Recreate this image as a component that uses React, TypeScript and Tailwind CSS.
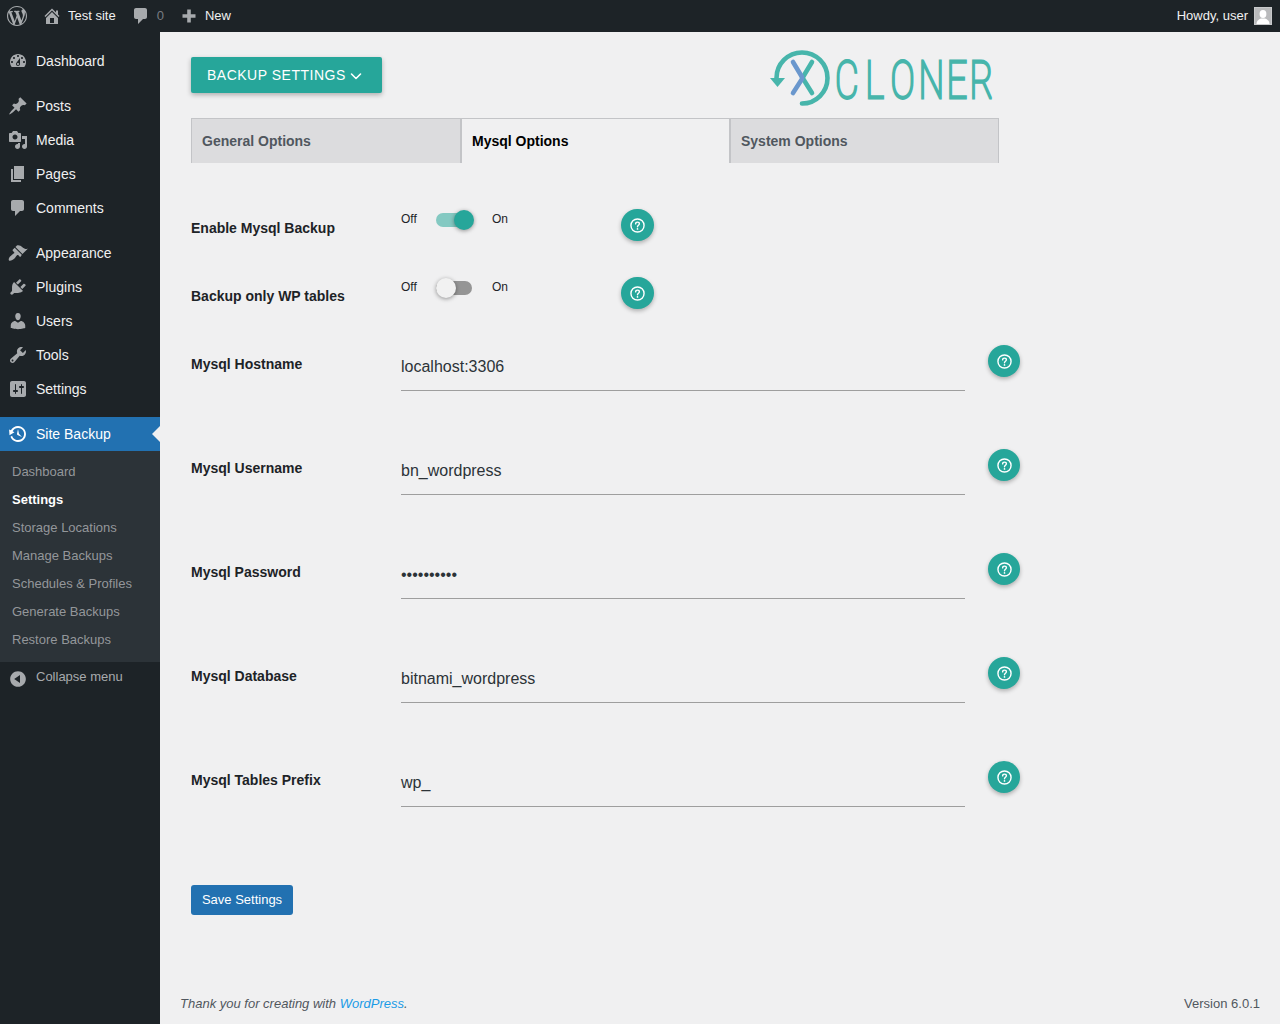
import React from "react";

const FONT = "[font-family:'Liberation_Sans',Arial,sans-serif]";

const P: Record<string, string> = {
  wp: "M20 10c0-5.51-4.49-10-10-10C4.48 0 0 4.49 0 10c0 5.52 4.48 10 10 10 5.51 0 10-4.48 10-10zM7.78 15.37L4.37 6.22c.55-.02 1.17-.08 1.17-.08.5-.06.44-1.13-.06-1.11 0 0-1.45.11-2.37.11-.18 0-.37 0-.58-.01C4.12 2.69 6.87 1.11 10 1.11c2.33 0 4.45.87 6.05 2.34-.68-.11-1.65.39-1.65 1.58 0 .74.45 1.36.9 2.1.35.61.55 1.36.55 2.46 0 1.49-1.4 5-1.4 5l-3.03-8.37c.54-.02.82-.17.82-.17.5-.05.44-1.25-.06-1.22 0 0-1.44.12-2.38.12-.87 0-2.33-.12-2.33-.12-.5-.03-.56 1.2-.06 1.22l.92.08 1.26 3.41zM17.41 10c.24-.64.74-1.87.43-4.25.7 1.29 1.05 2.71 1.05 4.25 0 3.29-1.73 6.24-4.4 7.78.97-2.59 1.94-5.2 2.92-7.78zM6.1 18.09C3.12 16.65 1.11 13.53 1.11 10c0-1.3.23-2.48.72-3.59C3.25 10.3 4.67 14.2 6.1 18.09zm4.03-6.63l2.58 6.98c-.86.29-1.76.45-2.71.45-.79 0-1.57-.11-2.29-.33.81-2.38 1.62-4.74 2.42-7.1z",
  home: "M16 8.5l1.53 1.53-1.06 1.06L10 4.62l-6.47 6.47-1.06-1.06L10 2.5l4 4v-2h2v4zm-6-2.46l6 5.99V18H4v-5.97zM12 17v-5H8v5h4z",
  comment: "M5 2h9c1.1 0 2 .9 2 2v7c0 1.1-.9 2-2 2h-2l-5 5v-5H5c-1.1 0-2-.9-2-2V4c0-1.1.9-2 2-2z",
  plus: "M16.5 8.2v3.6h-4.7v4.7H8.2v-4.7H3.5V8.2h4.7V3.5h3.6v4.7z",
  dashboard: "M3.76 16h12.48c1.1-1.37 1.76-3.11 1.76-5 0-4.42-3.58-8-8-8s-8 3.58-8 8c0 1.89.66 3.63 1.76 5zM10 4c.55 0 1 .45 1 1s-.45 1-1 1-1-.45-1-1 .45-1 1-1zM6 6c.55 0 1 .45 1 1s-.45 1-1 1-1-.45-1-1 .45-1 1-1zm8 0c.55 0 1 .45 1 1s-.45 1-1 1-1-.45-1-1 .45-1 1-1zm-5.37 5.55L12 7v6c0 1.1-.9 2-2 2s-2-.9-2-2c0-.57.24-1.08.63-1.45zM4 10c.55 0 1 .45 1 1s-.45 1-1 1-1-.45-1-1 .45-1 1-1zm12 0c.55 0 1 .45 1 1s-.45 1-1 1-1-.45-1-1 .45-1 1-1zm-5 3c0-.55-.45-1-1-1s-1 .45-1 1 .45 1 1 1 1-.45 1-1z",
  pin: "M10.44 3.02l1.82-1.82 6.36 6.35-1.83 1.82c-1.05-.68-2.48-.57-3.41.36l-.75.75c-.92.93-1.04 2.35-.35 3.41l-1.83 1.82-2.41-2.41-2.8 2.79c-.42.42-3.38 2.71-3.8 2.29s1.86-3.39 2.28-3.81l2.79-2.79L4.1 9.36l1.83-1.82c1.05.69 2.48.57 3.4-.36l.75-.75c.93-.92 1.05-2.35.36-3.41z",
  media: "M13 11V4c0-.55-.45-1-1-1h-1.67L9 1H5L3.67 3H2c-.55 0-1 .45-1 1v7c0 .55.45 1 1 1h10c.55 0 1-.45 1-1zM7 4.5c1.38 0 2.5 1.12 2.5 2.5S8.38 9.5 7 9.5 4.5 8.38 4.5 7 5.62 4.5 7 4.5zM14 6h5v10.5c0 1.38-1.12 2.5-2.5 2.5S14 17.88 14 16.5s1.12-2.5 2.5-2.5c.17 0 .34.02.5.05V9h-3V6zm-4 8.05V13h2v3.5c0 1.38-1.12 2.5-2.5 2.5S7 17.88 7 16.5 8.12 14 9.5 14c.17 0 .34.02.5.05z",
  page: "M6 15V2h10v13H6zm-1 1h8v2H3V5h2v11z",
  appearance: "M14.48 11.06L7.41 3.99l1.5-1.5c.5-.56 2.3-.47 3.51.32 1.21.8 1.43 1.28 2.91 2.1 1.18.64 2.45 1.26 4.45.85zm-.71.71L6.7 4.7 4.93 6.47c-.39.39-.39 1.02 0 1.41l1.06 1.06c.39.39.39 1.03 0 1.42-.6.6-1.43 1.11-2.21 1.69-.35.26-.7.53-1.01.84C1.43 13.23.1 16.5 1 17.4c.9.9 4.13-.47 5.47-1.81.31-.31.58-.66.85-1.02.57-.78 1.08-1.6 1.69-2.21.39-.39 1.02-.39 1.41 0l1.06 1.06c.39.39 1.02.39 1.41 0z",
  plugins: "M13.11 4.36L9.87 7.6 8 5.73l3.24-3.24c.35-.34 1.05-.2 1.56.32.52.51.66 1.21.31 1.55zm-8 1.77l.91-1.12 9.01 9.01-1.19.84c-.71.71-2.63 1.16-3.82 1.16H6.14L4.9 17.26c-.59.59-1.54.59-2.12 0-.59-.58-.59-1.53 0-2.12l1.24-1.24v-3.88c0-1.13.4-3.19 1.09-3.89zm7.26 3.97l3.24-3.24c.34-.35 1.04-.21 1.55.31.52.51.66 1.21.31 1.55l-3.24 3.25z",
  users: "M10 9.25c-2.27 0-2.73-3.44-2.73-3.44C7 4.02 7.82 2 9.97 2c2.16 0 2.98 2.02 2.71 3.81 0 0-.41 3.44-2.68 3.44zm0 2.57L12.72 10c2.39 0 4.52 2.33 4.52 4.53v2.49s-3.65 1.13-7.24 1.13c-3.65 0-7.24-1.13-7.24-1.13v-2.49c0-2.25 1.94-4.48 4.47-4.48z",
  tools: "M16.68 9.77c-1.34 1.34-3.3 1.67-4.95.99l-5.41 6.52c-.99.99-2.59.99-3.58 0s-.99-2.59 0-3.57l6.52-5.42c-.68-1.65-.35-3.61.99-4.95 1.28-1.28 3.12-1.62 4.72-1.06l-2.89 2.89 2.82 2.82 2.86-2.87c.53 1.58.18 3.39-1.08 4.65zM3.81 16.21c.4.39 1.04.39 1.43 0 .4-.4.4-1.04 0-1.43-.39-.4-1.03-.4-1.43 0-.39.39-.39 1.03 0 1.43z",
  settings: "M18 16V4c0-1.1-.9-2-2-2H4c-1.1 0-2 .9-2 2v12c0 1.1.9 2 2 2h12c1.1 0 2-.9 2-2zM8 11h1c.55 0 1 .45 1 1s-.45 1-1 1H8v1.5c0 .28-.22.5-.5.5s-.5-.22-.5-.5V13H6c-.55 0-1-.45-1-1s.45-1 1-1h1V5.5c0-.28.22-.5.5-.5s.5.22.5.5V11zm5-2h-1c-.55 0-1-.45-1-1s.45-1 1-1h1V5.5c0-.28.22-.5.5-.5s.5.22.5.5V7h1c.55 0 1 .45 1 1s-.45 1-1 1h-1v5.5c0 .28-.22.5-.5.5s-.5-.22-.5-.5V9z",
  backup: "M13.65 2.88c3.93 2.01 5.48 6.84 3.47 10.77s-6.83 5.48-10.77 3.47c-1.87-.96-3.2-2.56-3.86-4.4l1.64-1.03c.45 1.57 1.52 2.95 3.08 3.76 3.01 1.54 6.69.35 8.23-2.66 1.55-3.01.36-6.69-2.65-8.24C9.78 3.01 6.1 4.2 4.56 7.21l1.88.97-4.95 3.08-.39-5.82 1.78.91C4.89 2.4 9.72.86 13.65 2.88zm-4.36 7.83C9.11 10.53 9 10.28 9 10c0-.07.03-.12.04-.19h-.01L10 5l.97 4.81L14 13l-4.5-2.12.02-.02c-.08-.04-.16-.09-.23-.15z",
  collapse: "M10 2.16c4.33 0 7.84 3.51 7.84 7.84s-3.51 7.84-7.84 7.84S2.16 14.33 2.16 10 5.71 2.16 10 2.16zm2 11.72V6.12L6.18 9.97z",
};

function Dash({ name, className }: { name: string; className: string }) {
  return (
    <svg viewBox="0 0 20 20" className={className} fill="currentColor" fillRule="evenodd">
      <path d={P[name]} />
    </svg>
  );
}

function MenuItem({ icon, label }: { icon: string; label: string }) {
  return (
    <div className="flex h-[34px] items-center text-[14px] text-[#f0f0f1]">
      <Dash name={icon} className="ml-2 mr-2 h-5 w-5 shrink-0 text-[#a7aaad]" />
      <span>{label}</span>
    </div>
  );
}

function Sidebar() {
  const subs = ["Dashboard", "Settings", "Storage Locations", "Manage Backups", "Schedules & Profiles", "Generate Backups", "Restore Backups"];
  return (
    <aside className="flex w-40 shrink-0 flex-col bg-[#1d2327] pt-3">
      <MenuItem icon="dashboard" label="Dashboard" />
      <div className="h-[11px]" />
      <MenuItem icon="pin" label="Posts" />
      <MenuItem icon="media" label="Media" />
      <MenuItem icon="page" label="Pages" />
      <MenuItem icon="comment" label="Comments" />
      <div className="h-[11px]" />
      <MenuItem icon="appearance" label="Appearance" />
      <MenuItem icon="plugins" label="Plugins" />
      <MenuItem icon="users" label="Users" />
      <MenuItem icon="tools" label="Tools" />
      <MenuItem icon="settings" label="Settings" />
      <div className="h-[11px]" />
      <div className="relative flex h-[34px] items-center bg-[#2271b1] text-[14px] text-white">
        <Dash name="backup" className="ml-2 mr-2 h-5 w-5 shrink-0 text-white" />
        <span>Site Backup</span>
        <div className="absolute right-0 top-[9px] h-0 w-0 border-y-[8px] border-r-[8px] border-y-transparent border-r-[#f0f0f1]" />
      </div>
      <div className="bg-[#2c3338] pb-[8px] pt-[7px] text-[13px] text-[#c3c4c7]/70">
        {subs.map((s) => (
          <div key={s} className={`flex h-[28px] items-center pl-3 ${s === "Settings" ? "font-semibold text-white" : ""}`}>
            {s}
          </div>
        ))}
      </div>
      <div className="flex h-[32px] items-start text-[13px] text-[#a7aaad]">
        <Dash name="collapse" className="ml-2 mt-[7px] h-5 w-5 shrink-0 text-[#a7aaad]" />
        <span className="pl-2 pt-[5px]">Collapse menu</span>
      </div>
    </aside>
  );
}

function AdminBar() {
  return (
    <header className="flex h-8 shrink-0 items-center bg-[#1d2327] text-[13px] text-[#f0f0f1]">
      <Dash name="wp" className="ml-[7px] h-5 w-5 text-[#a7aaad]" />
      <Dash name="home" className="ml-[15px] h-5 w-5 text-[#a7aaad]" />
      <span className="ml-[6px]">Test site</span>
      <Dash name="comment" className="ml-[15px] h-5 w-5 text-[#a7aaad]" />
      <span className="ml-[6px] text-[#787c82]">0</span>
      <Dash name="plus" className="ml-[15px] h-5 w-5 text-[#a7aaad]" />
      <span className="ml-[6px]">New</span>
      <span className="ml-auto">Howdy, user</span>
      <svg viewBox="0 0 18 18" className="ml-[6px] mr-2 h-[18px] w-[18px]">
        <rect width="18" height="18" fill="#c8c9cb" />
        <rect x="1" y="1" width="16" height="16" fill="#b9babc" />
        <ellipse cx="9" cy="7" rx="3.4" ry="4" fill="#fff" />
        <path d="M2.5 17c0-3.5 3-5 4.5-5.5h4c1.5.5 4.5 2 4.5 5.5z" fill="#fff" />
      </svg>
    </header>
  );
}

function Help({ className = "" }: { className?: string }) {
  return (
    <button className={`flex h-8 shrink-0 items-center justify-center rounded-full bg-[#26a69a] text-white shadow-[0_2px_4px_rgba(0,0,0,0.28)] ${className}`}>
      <svg viewBox="0 0 16 16" className="h-[15px] w-[15px]" fill="none" stroke="currentColor" strokeWidth="1.5" strokeLinecap="round">
        <circle cx="8" cy="8" r="7" />
        <path d="M6 6.3c0-1.2.9-1.9 2-1.9s2 .7 2 1.8c0 1.5-2 1.6-2 3.1" />
        <path d="M8 11.6v.1" strokeWidth="1.8" />
      </svg>
    </button>
  );
}

function ToggleRow({ label, on }: { label: string; on: boolean }) {
  return (
    <div className="flex h-[68px] items-start">
      <label className="w-[210px] shrink-0 pt-[10px] text-[14px] font-bold leading-[18px] text-[#1d2327]">{label}</label>
      <div className="flex w-[220px] shrink-0 items-center pt-[1px] text-[12px] leading-[18px] text-[#1d2327]">
        <span className="w-[35px]">Off</span>
        <span className={`relative top-[1px] h-[14px] w-[36px] rounded-full ${on ? "bg-[#84c9c2]" : "bg-[#959595]"}`}>
          <span className={`absolute top-[-3px] h-5 w-5 rounded-full shadow-[0_1px_4px_rgba(0,0,0,0.4)] ${on ? "left-[18px] bg-[#26a69a]" : "left-0 bg-[#f1f1f1]"}`} />
        </span>
        <span className="ml-5">On</span>
      </div>
      <Help className="w-[33px]" />
    </div>
  );
}

function InputRow({ label, value }: { label: string; value: string }) {
  return (
    <div className="flex h-[104px] items-start">
      <label className="w-[210px] shrink-0 pt-[10px] text-[14px] font-bold leading-[18px] text-[#1d2327]">{label}</label>
      <div className="flex h-[46px] w-[564px] shrink-0 items-center border-b border-[#9e9e9e] pb-[2px] text-[16px] text-[#2c3338]">{value}</div>
      <Help className="ml-[23px] w-8" />
    </div>
  );
}

function Logo() {
  return (
    <svg viewBox="0 0 280 64" className="h-16 w-[280px]">
      <g fill="none" strokeLinecap="round">
        <path d="M6.5 32 A25.5 25.5 0 1 1 32 57.5" stroke="#47b5ab" strokeWidth="4.6" />
        <path d="M32 31 L42 47" stroke="#47b5ab" strokeWidth="4.6" />
        <path d="M42 16 L33 31" stroke="#47b5ab" strokeWidth="4.6" />
        <path d="M23 16 L32 31" stroke="#6a97cd" strokeWidth="4.6" />
        <path d="M32 33 L23 47" stroke="#6a97cd" strokeWidth="4.6" />
      </g>
      <path d="M0 32 H15 L7.5 41 Z" fill="#47b5ab" />
      <text
        transform="scale(0.7 1)"
        x="93 136 172 212 252 285"
        y="52"
        fontFamily="Roboto, sans-serif"
        fontWeight={100}
        fontSize="52"
        fill="#47b5ab"
        stroke="#47b5ab"
        strokeWidth="2.4"
        vectorEffect="non-scaling-stroke"
      >
        CLONER
      </text>
    </svg>
  );
}

function Main() {
  return (
    <main className="flex min-w-0 flex-1 flex-col bg-[#f0f0f1] pl-[31px]">
      <div className="relative flex h-[86px] items-start pt-[25px]">
        <button className="flex h-9 w-[191px] items-center rounded-[2px] bg-[#26a69a] pl-4 text-[14px] tracking-[0.5px] text-white shadow-[0_2px_5px_rgba(0,0,0,0.28)]">
          BACKUP SETTINGS
          <svg viewBox="0 0 12 12" className="ml-1 mt-[2px] h-3 w-3" fill="none" stroke="currentColor" strokeWidth="1.6" strokeLinecap="round" strokeLinejoin="round">
            <path d="M1.5 4l4.5 4.5L10.5 4" />
          </svg>
        </button>
        <div className="absolute left-[579px] top-[14px]">
          <Logo />
        </div>
      </div>
      <div className="flex h-[45px] w-[808px] text-[14px] font-bold">
        <div className="flex w-[270px] items-center border-x border-t border-[#c3c4c7] bg-[#dcdcde] pl-[10px] text-[#50575e]">General Options</div>
        <div className="flex w-[269px] items-center border-x border-t border-[#c3c4c7] pl-[10px] text-black">Mysql Options</div>
        <div className="flex w-[269px] items-center border-x border-t border-[#c3c4c7] bg-[#dcdcde] pl-[10px] text-[#50575e]">System Options</div>
      </div>
      <div className="mt-[46px]">
        <ToggleRow label="Enable Mysql Backup" on />
        <ToggleRow label="Backup only WP tables" on={false} />
        <InputRow label="Mysql Hostname" value="localhost:3306" />
        <InputRow label="Mysql Username" value="bn_wordpress" />
        <InputRow label="Mysql Password" value="••••••••••" />
        <InputRow label="Mysql Database" value="bitnami_wordpress" />
        <InputRow label="Mysql Tables Prefix" value="wp_" />
      </div>
      <div className="mt-5">
        <button className="h-[30px] w-[102px] rounded-[3px] bg-[#2271b1] text-[13px] text-white">Save Settings</button>
      </div>
      <div className="mt-auto flex items-center justify-between pb-[11px] pr-5 text-[13px] leading-[18px] text-[#50575e]">
        <span className="ml-[-11px] italic">
          Thank you for creating with <span className="text-[#1a9be6]">WordPress</span>.
        </span>
        <span>Version 6.0.1</span>
      </div>
    </main>
  );
}

export default function App() {
  return (
    <div className={`flex h-[1024px] w-[1280px] flex-col overflow-hidden bg-[#f0f0f1] ${FONT}`}>
      <AdminBar />
      <div className="flex min-h-0 flex-1">
        <Sidebar />
        <Main />
      </div>
    </div>
  );
}
